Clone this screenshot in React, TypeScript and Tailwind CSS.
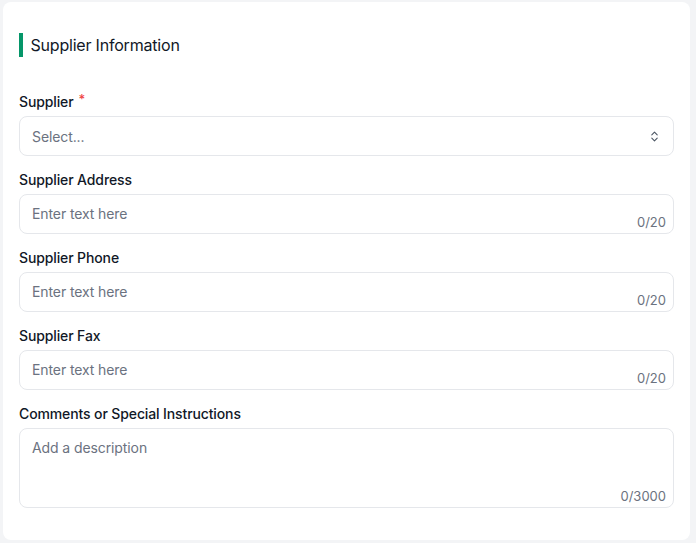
import React from "react";
import { ChevronsUpDown } from "lucide-react";

function Label({ text, required }: { text: string; required?: boolean }) {
  return (
    <div className="h-5 flex items-center text-[14px] leading-5 font-medium text-[#111827] mb-1 tracking-[-0.12px]">
      {text}
      {required && <span className="ml-[5px] text-[#ef4444] text-[13px] -mt-1.5">*</span>}
    </div>
  );
}

function TextField({ label }: { label: string }) {
  return (
    <div>
      <Label text={label} />
      <div className="h-10 rounded-lg border border-[#e5e7eb] bg-white relative px-3 pt-[10px]">
        <div className="text-[14px] leading-[18px] text-[#6b7280] tracking-[-0.1px]">Enter text here</div>
        <div className="absolute right-[7px] bottom-[3px] text-[13px] leading-4 text-[#6b7280]">0/20</div>
      </div>
    </div>
  );
}

export default function App() {
  return (
    <div className="w-[696px] h-[543px] bg-[#f3f4f6] pl-[3px] pt-[2px] pr-[6px] pb-[3px]" style={{ fontFamily: "Inter, 'Noto Sans', sans-serif" }}>
      <div className="h-full bg-white rounded-lg px-4 pt-[31px]">
        <div className="flex items-center h-6">
          <div className="w-[3.5px] h-6 bg-[#059669] mr-2"></div>
          <div className="text-[16px] text-[#111827] tracking-[-0.2px]">Supplier Information</div>
        </div>
        <div className="mt-[35px] flex flex-col gap-[14px]">
          <div>
            <Label text="Supplier" required />
            <div className="h-10 rounded-lg border border-[#e5e7eb] bg-white flex items-center justify-between px-3">
              <span className="text-[14px] text-[#6b7280] tracking-[-0.1px]">Select...</span>
              <ChevronsUpDown size={13} className="text-[#4b5563]" strokeWidth={2} />
            </div>
          </div>
          <TextField label="Supplier Address" />
          <TextField label="Supplier Phone" />
          <TextField label="Supplier Fax" />
          <div>
            <Label text="Comments or Special Instructions" />
            <div className="h-[80px] rounded-lg border border-[#e5e7eb] bg-white relative px-3 pt-[10px]">
              <div className="text-[14px] leading-[18px] text-[#6b7280] tracking-[-0.1px]">Add a description</div>
              <div className="absolute right-[7px] bottom-[3px] text-[13px] leading-4 text-[#6b7280]">0/3000</div>
            </div>
          </div>
        </div>
      </div>
    </div>
  );
}
